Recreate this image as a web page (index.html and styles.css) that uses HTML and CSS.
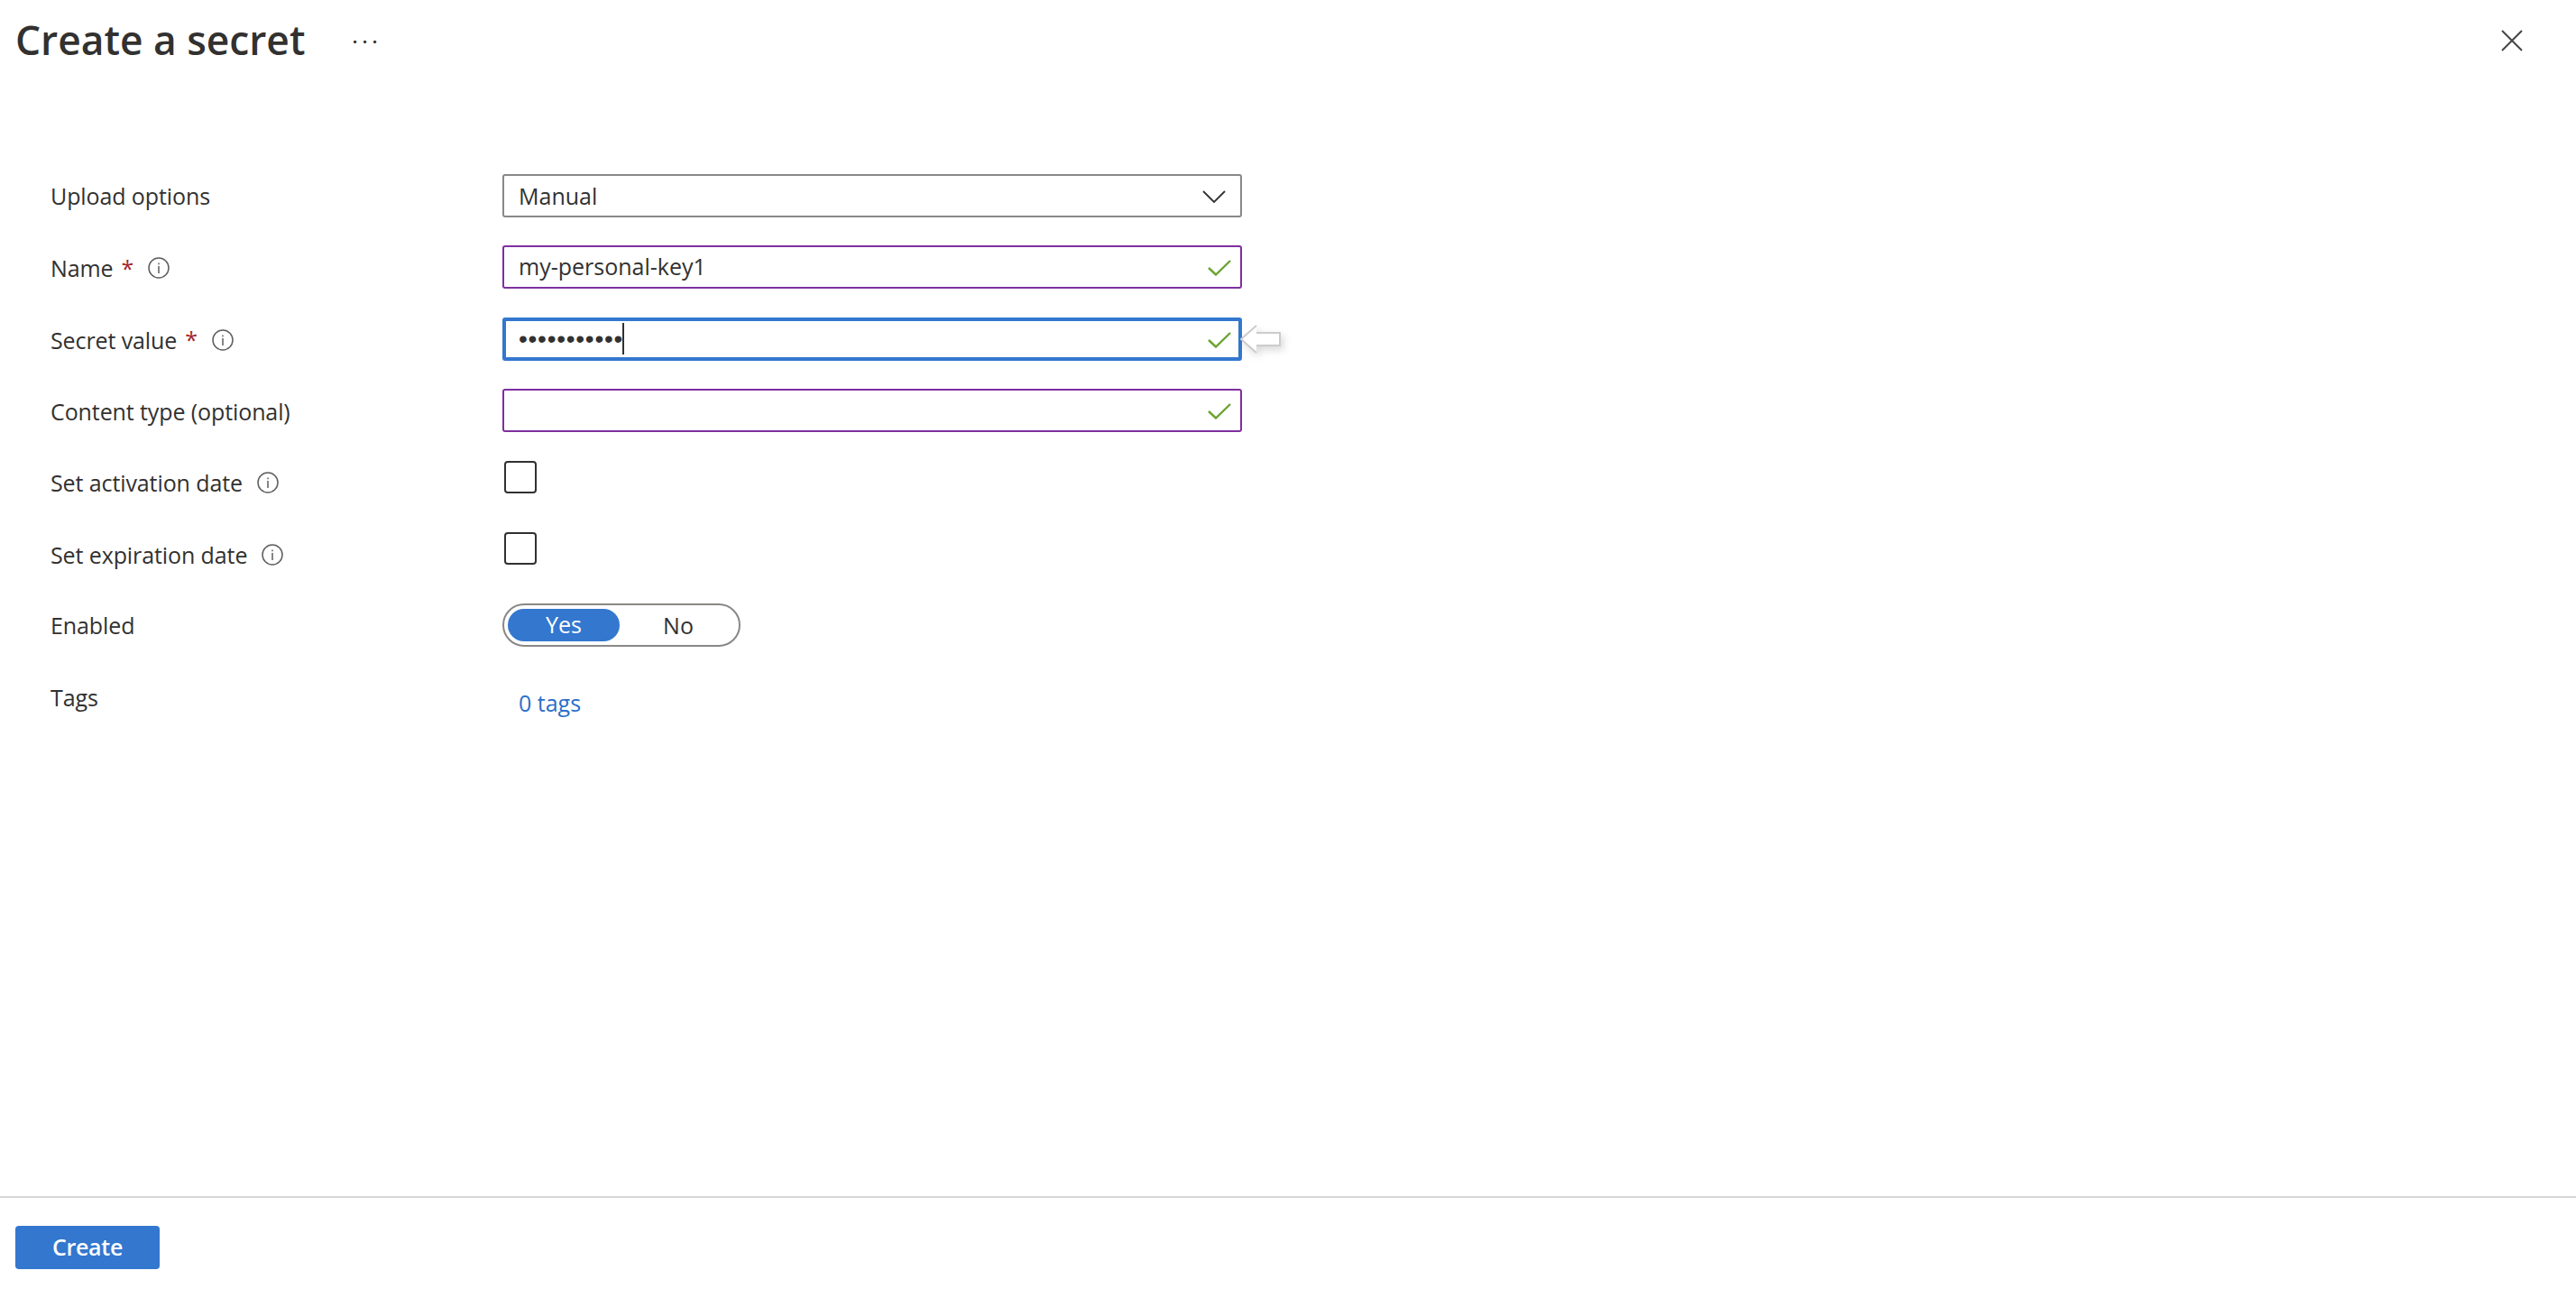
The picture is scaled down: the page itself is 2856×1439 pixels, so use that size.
FILE: index.html
```html
<!DOCTYPE html>
<html lang="en">
<head>
<meta charset="utf-8">
<title>Create a secret</title>
<link rel="stylesheet" href="styles.css">
</head>
<body>
<header class="header">
  <h1 class="title">Create a secret</h1>
  <span class="more">···</span>
  <svg class="close" width="24" height="24" viewBox="0 0 24 24"><path d="M1 1 23 23M23 1 1 23" stroke="#484644" stroke-width="2" fill="none"/></svg>
</header>
<main class="form">
  <div class="label label-tight"><span>Upload options</span></div>
  <div class="field field-select"><span class="value">Manual</span>
    <svg class="chevron" width="26" height="14" viewBox="0 0 26 14"><path d="M1 1 13 13 25 1" stroke="#323130" stroke-width="1.800" fill="none"/></svg>
  </div>

  <div class="label"><span>Name</span><span class="req">*</span>
    <svg class="info" width="24" height="24" viewBox="0 0 24 24"><circle cx="12" cy="12" r="11" fill="none" stroke="#605e5c" stroke-width="1.5"/><path d="M12 10v8M12 6.500v1.800" stroke="#605e5c" stroke-width="1.500"/></svg>
  </div>
  <div class="field field-valid"><span class="value">my-personal-key1</span>
    <svg class="check" width="26" height="18" viewBox="0 0 26 18"><path d="M1 9 9 16.500 25 1" stroke="#6ba32f" stroke-width="2.400" fill="none"/></svg>
  </div>

  <div class="label"><span>Secret value</span><span class="req">*</span>
    <svg class="info" width="24" height="24" viewBox="0 0 24 24"><circle cx="12" cy="12" r="11" fill="none" stroke="#605e5c" stroke-width="1.5"/><path d="M12 10v8M12 6.500v1.800" stroke="#605e5c" stroke-width="1.500"/></svg>
  </div>
  <div class="field field-focus"><span class="dots">•••••••••••</span><span class="caret"></span>
    <svg class="check" width="26" height="18" viewBox="0 0 26 18"><path d="M1 9 9 16.500 25 1" stroke="#6ba32f" stroke-width="2.400" fill="none"/></svg>
    <svg class="pointer" width="46" height="34" viewBox="0 0 46 34"><path d="M18 2 1 17 18 32V24H44V10H18Z" fill="#fff"/><path d="M18 2 1 17 18 32M18 10H44V24H18" fill="none" stroke="#cccccc" stroke-width="2"/></svg>
  </div>

  <div class="label"><span>Content type (optional)</span></div>
  <div class="field field-valid">
    <svg class="check" width="26" height="18" viewBox="0 0 26 18"><path d="M1 9 9 16.500 25 1" stroke="#6ba32f" stroke-width="2.400" fill="none"/></svg>
  </div>

  <div class="label label-tight"><span>Set activation date</span>
    <svg class="info" width="24" height="24" viewBox="0 0 24 24"><circle cx="12" cy="12" r="11" fill="none" stroke="#605e5c" stroke-width="1.5"/><path d="M12 10v8M12 6.500v1.800" stroke="#605e5c" stroke-width="1.500"/></svg>
  </div>
  <div class="cell"><span class="checkbox"></span></div>

  <div class="label"><span>Set expiration date</span>
    <svg class="info" width="24" height="24" viewBox="0 0 24 24"><circle cx="12" cy="12" r="11" fill="none" stroke="#605e5c" stroke-width="1.5"/><path d="M12 10v8M12 6.500v1.800" stroke="#605e5c" stroke-width="1.500"/></svg>
  </div>
  <div class="cell"><span class="checkbox"></span></div>

  <div class="label label-tight"><span>Enabled</span></div>
  <div class="cell">
    <div class="toggle"><span class="toggle-on">Yes</span><span class="toggle-off">No</span></div>
  </div>

  <div class="label label-tight"><span>Tags</span></div>
  <div class="cell"><a class="link">0 tags</a></div>
</main>
<footer class="footer">
  <button class="primary">Create</button>
</footer>
</body>
</html>
```
FILE: styles.css
```css
* { box-sizing: border-box; }
html, body { margin: 0; height: 100%; }
body {
  display: flex;
  flex-direction: column;
  height: 1439px;
  overflow: hidden;
  background: #fff;
  color: #323130;
  font-family: "Open Sans", "Noto Sans", sans-serif;
  font-size: 25px;
}
.header {
  display: flex;
  align-items: center;
  height: 90px;
  padding: 0 59px 0 17px;
}
.title {
  margin: 0;
  font-size: 44.300px;
  font-weight: 600;
  line-height: 88px;
  height: 90px;
}
.more {
  margin-left: 52px;
  font-size: 22px;
  line-height: 1;
  letter-spacing: 5px;
  font-weight: 600;
}
.close { margin-left: auto; }
.form {
  flex: 1;
  display: grid;
  grid-template-columns: 501px 820px;
  grid-auto-rows: 79.4px;
  margin-top: 103px;
  padding-left: 56px;
}
.label {
  display: flex;
  align-items: center;
  height: 50px;
  letter-spacing: -0.1px;
}
.label-tight { height: 48px; }
.req {
  margin-left: 9px;
  color: #a4262c;
  line-height: 1;
}
.info { margin-left: 16px; flex: none; }
.field {
  position: relative;
  display: flex;
  align-items: center;
  width: 820px;
  height: 48px;
  padding-left: 16px;
  border: 2px solid #8a8886;
  border-radius: 3px;
}
.field-valid { border-color: #7f2fa0; padding-bottom: 2px; }
.field-focus { border: 4px solid #3377cf; padding-left: 14px; }
.dots {
  font-size: 28px;
  line-height: 40px;
  letter-spacing: 0.75px;
  font-family: "Liberation Sans", sans-serif;
}
.caret {
  width: 2px;
  height: 35px;
  background: #323130;
  margin-left: -1px;
}
.chevron { position: absolute; right: 16px; top: 16px; }
.check { position: absolute; right: 10px; top: 14px; }
.field-focus .check { right: 8px; top: 12px; }
.pointer { position: absolute; left: 814px; top: 3px; filter: drop-shadow(3px 4px 4px rgba(0,0,0,0.15)); }
.cell { display: block; }
.checkbox {
  display: block;
  width: 36px;
  height: 36px;
  margin-left: 2px;
  border: 2px solid #323130;
  border-radius: 4px;
}
.toggle {
  display: flex;
  align-items: center;
  width: 264px;
  height: 48px;
  padding-left: 4px;
  border: 2px solid #8a8886;
  border-radius: 24px;
}
.toggle-on {
  width: 124px;
  height: 36px;
  line-height: 35px;
  text-align: center;
  color: #fff;
  background: #3377cf;
  border-radius: 18px;
}
.toggle-off { width: 130px; text-align: center; }
.link {
  display: block;
  margin: 12px 0 0 18px;
  line-height: 36px;
  color: #2a70c8;
}
.footer {
  height: 113px;
  padding: 31px 17px;
  border-top: 2px solid #d6d6d6;
}
.primary {
  display: block;
  width: 160px;
  height: 48px;
  padding: 0 0 3px;
  border: 0;
  border-radius: 4px;
  background: #3377cf;
  color: #fff;
  font: 600 25px "Open Sans", sans-serif;
  letter-spacing: -0.3px;
}
```
